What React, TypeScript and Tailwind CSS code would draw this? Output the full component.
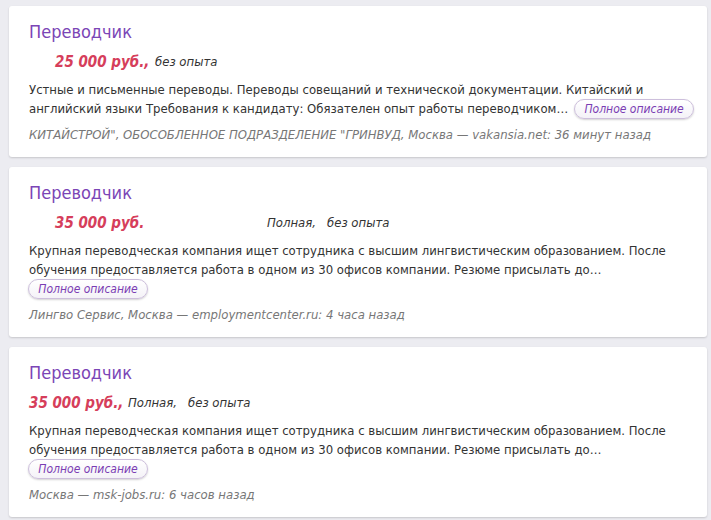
const FONT = "'DejaVu Sans Condensed', 'DejaVu Sans', sans-serif";

function MoreButton() {
  return (
    <span className="inline-flex h-[20px] w-[120px] items-center justify-center rounded-full border border-[#cdbfdc] bg-gradient-to-b from-white to-[#f4f2f7] align-middle text-[12px] italic leading-none text-[#7a3db3] shadow-[0_1px_2px_rgba(0,0,0,0.18)]">
      Полное описание
    </span>
  );
}

type Card = {
  salaryIndent: boolean;
  salary: string;
  salaryW: string;
  full: boolean;
  lines: string[];
  inlineButton: boolean;
  source: string;
};

const cards: Card[] = [
  {
    salaryIndent: true,
    salary: "25 000 руб.,",
    salaryW: "w-[100px]",
    full: false,
    lines: [
      "Устные и письменные переводы. Переводы совещаний и технической документации. Китайский и",
      "английский языки Требования к кандидату: Обязателен опыт работы переводчиком…",
    ],
    inlineButton: true,
    source:
      "КИТАЙСТРОЙ\", ОБОСОБЛЕННОЕ ПОДРАЗДЕЛЕНИЕ \"ГРИНВУД, Москва — vakansia.net: 36 минут назад",
  },
  {
    salaryIndent: true,
    salary: "35 000 руб.",
    salaryW: "w-[212px]",
    full: true,
    lines: [
      "Крупная переводческая компания ищет сотрудника с высшим лингвистическим образованием. После",
      "обучения предоставляется работа в одном из 30 офисов компании. Резюме присылать до…",
    ],
    inlineButton: false,
    source: "Лингво Сервис, Москва — employmentcenter.ru: 4 часа назад",
  },
  {
    salaryIndent: false,
    salary: "35 000 руб.,",
    salaryW: "w-[99px]",
    full: true,
    lines: [
      "Крупная переводческая компания ищет сотрудника с высшим лингвистическим образованием. После",
      "обучения предоставляется работа в одном из 30 офисов компании. Резюме присылать до…",
    ],
    inlineButton: false,
    source: "Москва — msk-jobs.ru: 6 часов назад",
  },
];

export default function App() {
  return (
    <div
      className="flex min-h-[520px] flex-col gap-[10px] bg-[#ececf1] pb-[2px] pl-[9px] pt-[6px]"
      style={{ fontFamily: FONT }}
    >
      {cards.map((c, i) => (
        <div
          key={i}
          className="w-[698px] rounded-[3px] bg-white pb-[13px] pl-[20px] pr-[10px] pt-[13px] shadow-[0_1px_2px_rgba(0,0,0,0.16)]"
        >
          <div className="h-[26px] text-[18px] leading-[26px] text-[#7b45b6]">Переводчик</div>
          <div className={`mt-[5px] flex h-[24px] items-center italic ${c.salaryIndent ? "pl-[26px]" : ""}`}>
            <span className={`${c.salaryW} shrink-0 text-[15px] font-bold text-[#d63e5b]`}>{c.salary}</span>
            {c.full && <span className="w-[60px] shrink-0 text-[13px] text-[#333]">Полная,</span>}
            <span className="text-[13px] text-[#333]">без опыта</span>
          </div>
          <div className="mt-[6px] whitespace-nowrap text-[13px] leading-[19px] text-[#333]">
            <div>{c.lines[0]}</div>
            <div className="flex h-[19px] items-center">
              <span>{c.lines[1]}</span>
              {c.inlineButton && (
                <span className="ml-[6px] flex">
                  <MoreButton />
                </span>
              )}
            </div>
            {!c.inlineButton && (
              <div className="flex h-[19px] items-center">
                <span className="-ml-px flex">
                  <MoreButton />
                </span>
              </div>
            )}
          </div>
          <div className="mt-[7px] h-[19px] whitespace-nowrap text-[13px] italic leading-[19px] text-[#777]">
            {c.source}
          </div>
        </div>
      ))}
    </div>
  );
}
